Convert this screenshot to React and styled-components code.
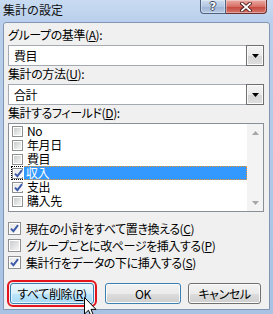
import React from "react";
import styled, { createGlobalStyle } from "styled-components";

const jp = `"Noto Sans CJK JP", "Noto Sans", sans-serif`;

const GlobalStyle = createGlobalStyle`
  html, body { margin: 0; padding: 0; }
  body {
    width: 273px; height: 314px; overflow: hidden;
    background: #b4cbe8;
    font-family: ${jp};
  }
`;

const Window = styled.div`
  position: relative;
  width: 273px;
  height: 314px;
  box-sizing: border-box;
  display: flex;
  flex-direction: column;
  background: linear-gradient(to bottom, #c8dbf2 0px, #b9cfeb 22px, #a9c2e3 100%);
  font-family: ${jp};
  font-size: 12px;
  color: #000;
  overflow: hidden;
`;

const TitleBar = styled.div`
  flex: none;
  height: 22px;
  display: flex;
  justify-content: space-between;
  align-items: flex-start;
`;

const Title = styled.div`
  padding: 2px 0 0 3px;
  font-size: 12px;
  line-height: 16px;
  color: #101010;
`;

const Controls = styled.div`
  display: flex;
  margin-right: 6px;
`;

const CaptionButton = styled.div`
  width: ${(p) => p.$w}px;
  height: 14px;
  box-sizing: border-box;
  display: flex;
  align-items: center;
  justify-content: center;
  border: 1px solid ${(p) => (p.$close ? "#6e3030" : "#4f6380")};
  border-top: none;
  border-left: ${(p) => (p.$close ? "none" : undefined)};
  border-radius: ${(p) => (p.$close ? "0 0 4px 0" : "0 0 0 4px")};
  background: ${(p) =>
    p.$close
      ? "linear-gradient(#e9aba5, #d86f66 50%, #c4453b 51%, #d4766a)"
      : "linear-gradient(#cddcef, #b3c7e2 50%, #9db4d5 51%, #b9cbe4)"};
  box-shadow: inset 0 0 0 1px rgba(255, 255, 255, 0.35);
`;

const HelpGlyph = styled.span`
  font-family: "DejaVu Sans", sans-serif;
  font-weight: bold;
  font-size: 11px;
  line-height: 12px;
  color: #fff;
  text-shadow: 1px 0 #3a4a62, -1px 0 #3a4a62, 0 1px #3a4a62, 0 -1px #3a4a62;
`;

const Client = styled.div`
  flex: 1;
  margin: 0 3px 4px 3px;
  border: 1px solid #8196b3;
  border-radius: 3px 3px 0 0;
  background: #f0f0f0;
  padding: 4px 5px 0 4px;
  display: flex;
  flex-direction: column;
  font-feature-settings: "palt";
  letter-spacing: -0.4px;
`;

const Label = styled.div`
  height: 16px;
  line-height: 16px;
  margin-bottom: 2px;
  white-space: nowrap;
`;

const Combo = styled.div`
  display: flex;
  height: 21px;
  box-sizing: border-box;
  border: 1px solid #a5a9b1;
  background: #fff;
`;

const ComboText = styled.div`
  flex: 1;
  padding-left: 5px;
  line-height: 19px;
`;

const DropButton = styled.div`
  width: 18px;
  margin: -1px -1px -1px 0;
  box-sizing: border-box;
  border: 1px solid #6f6f6f;
  box-shadow: inset 0 0 0 1px #fbfbfb;
  background: linear-gradient(#f4f4f4, #e9e9e9 50%, #d6d6d6 51%, #dedede);
  display: flex;
  align-items: center;
  justify-content: center;
`;

const ListBox = styled.div`
  height: 89px;
  box-sizing: border-box;
  border: 1px solid #8a8e96;
  background: #fff;
  display: flex;
`;

const Rows = styled.div`
  flex: 1;
  display: flex;
  flex-direction: column;
`;

const ListRow = styled.div`
  height: 14px;
  box-sizing: border-box;
  margin-left: 2px;
  display: flex;
  align-items: center;
  border: 1px dotted ${(p) => (p.$focus ? "#000" : "transparent")};
`;

const ListText = styled.div`
  flex: 1;
  align-self: stretch;
  margin-left: 1px;
  padding-left: 3px;
  line-height: 12px;
  white-space: nowrap;
  ${(p) =>
    p.$selected &&
    `
    margin: -1px -1px -1px 1px;
    padding-left: 2px;
    line-height: 12px;
    border: 1px dotted #f0922a;
    border-left: none;
    background: #3399ff;
    color: #fff;
  `}
`;

const ScrollBar = styled.div`
  width: 16px;
  background: #f3f3f3;
  display: flex;
  flex-direction: column;
  justify-content: space-between;
`;

const ScrollArrow = styled.div`
  height: 17px;
  display: flex;
  align-items: center;
  justify-content: center;
`;

const BoxFrame = styled.span`
  flex: none;
  width: ${(p) => p.$size}px;
  height: ${(p) => p.$size}px;
  box-sizing: border-box;
  border: 1px solid #8e8f8f;
  background: #fff;
  padding: 1px;
  display: flex;
`;

const BoxInner = styled.span`
  flex: 1;
  position: relative;
  background: ${(p) =>
    p.$checked
      ? "linear-gradient(135deg, #e8e8e8, #fbfbfb)"
      : "linear-gradient(135deg, #c9cbcf, #eaeaea 70%, #f4f4f4)"};
  display: flex;
  align-items: center;
  justify-content: center;
`;

const CheckRows = styled.div`
  margin-top: 8px;
  display: flex;
  flex-direction: column;
`;

const CheckRow = styled.div`
  height: 17px;
  display: flex;
  align-items: center;
  gap: 5px;
  white-space: nowrap;
`;

const ButtonRow = styled.div`
  margin: 12px 0 0 2px;
  display: flex;
`;

const PushButton = styled.div`
  width: ${(p) => p.$w}px;
  height: 21px;
  margin-right: ${(p) => p.$gap || 0}px;
  box-sizing: border-box;
  border: 1px solid ${(p) => (p.$kind === "normal" ? "#707070" : "#3c7fb1")};
  border-radius: 3px;
  box-shadow: inset 0 0 0 1px ${(p) => (p.$kind === "hover" ? "#e6f5fd" : "#fbfbfb")};
  background: ${(p) =>
    p.$kind === "hover"
      ? "linear-gradient(#eaf6fd, #d9f0fc 50%, #bee6fd 51%, #a7d9f5)"
      : "linear-gradient(#f2f2f2, #ebebeb 50%, #dddddd 51%, #cfcfcf)"};
  display: flex;
  align-items: center;
  justify-content: center;
  line-height: 19px;
  white-space: nowrap;
  outline: ${(p) => (p.$marked ? "2px solid #e3141c" : "none")};
  outline-offset: 1px;
`;

const Cursor = styled.svg`
  position: absolute;
  left: 84px;
  top: 297px;
`;

const Check = () => (
  <svg width="9" height="9" viewBox="0 0 9 9">
    <path d="M1 4.6 L3.4 7.2 L8 1.2" fill="none" stroke="#3c5aa8" strokeWidth="1.9" />
  </svg>
);

const Checkbox = ({ checked, size = 13 }) => (
  <BoxFrame $size={size}>
    <BoxInner $checked={checked}>{checked && <Check />}</BoxInner>
  </BoxFrame>
);

const Triangle = ({ dir = "down", color = "#000" }) => (
  <svg width="7" height="4" viewBox="0 0 7 4">
    <path d={dir === "down" ? "M0 0 H7 L3.5 4 Z" : "M0 4 H7 L3.5 0 Z"} fill={color} />
  </svg>
);

const fields = [
  { name: "No", checked: false },
  { name: "年月日", checked: false },
  { name: "費目", checked: false },
  { name: "収入", checked: true, selected: true },
  { name: "支出", checked: true },
  { name: "購入先", checked: false },
];

const options = [
  { text: "現在の小計をすべて置き換える(", key: "C", checked: true },
  { text: "グループごとに改ページを挿入する(", key: "P", checked: false },
  { text: "集計行をデータの下に挿入する(", key: "S", checked: true },
];

export default function App() {
  return (
    <>
      <GlobalStyle />
      <Window>
        <TitleBar>
          <Title>集計の設定</Title>
          <Controls>
            <CaptionButton $w={26}>
              <HelpGlyph>?</HelpGlyph>
            </CaptionButton>
            <CaptionButton $w={41} $close>
              <svg width="12" height="10" viewBox="0 0 12 10">
                <path d="M2 1.5 L10 8.5 M10 1.5 L2 8.5" stroke="#4a1c1c" strokeWidth="3.6" strokeLinecap="square" />
                <path d="M2 1.5 L10 8.5 M10 1.5 L2 8.5" stroke="#fff" strokeWidth="1.8" strokeLinecap="square" />
              </svg>
            </CaptionButton>
          </Controls>
        </TitleBar>
        <Client>
          <Label>
            グループの基準(<u>A</u>):
          </Label>
          <Combo>
            <ComboText>費目</ComboText>
            <DropButton>
              <Triangle />
            </DropButton>
          </Combo>
          <Label>
            集計の方法(<u>U</u>):
          </Label>
          <Combo>
            <ComboText>合計</ComboText>
            <DropButton>
              <Triangle />
            </DropButton>
          </Combo>
          <Label>
            集計するフィールド(<u>D</u>):
          </Label>
          <ListBox>
            <Rows>
              {fields.map((f) => (
                <ListRow key={f.name} $focus={f.selected}>
                  <Checkbox checked={f.checked} size={11} />
                  <ListText $selected={f.selected}>{f.name}</ListText>
                </ListRow>
              ))}
            </Rows>
            <ScrollBar>
              <ScrollArrow>
                <Triangle dir="up" color="#a6a6a6" />
              </ScrollArrow>
              <ScrollArrow>
                <Triangle dir="down" color="#a6a6a6" />
              </ScrollArrow>
            </ScrollBar>
          </ListBox>
          <CheckRows>
            {options.map((o) => (
              <CheckRow key={o.key}>
                <Checkbox checked={o.checked} />
                <span>
                  {o.text}
                  <u>{o.key}</u>)
                </span>
              </CheckRow>
            ))}
          </CheckRows>
          <ButtonRow>
            <PushButton $w={84} $gap={11} $kind="hover" $marked>
              すべて削除(<u>R</u>)
            </PushButton>
            <PushButton $w={76} $gap={7} $kind="default">
              OK
            </PushButton>
            <PushButton $w={73} $kind="normal">
              キャンセル
            </PushButton>
          </ButtonRow>
        </Client>
        <Cursor width="13" height="22" viewBox="0 0 13 22">
          <path
            d="M0.5 0.5 L0.5 17 L4.5 13.2 L7.2 19.5 L9.6 18.5 L7 12.4 L12 12.4 Z"
            fill="#fff"
            stroke="#000"
            strokeWidth="1"
            strokeLinejoin="miter"
          />
        </Cursor>
      </Window>
    </>
  );
}
